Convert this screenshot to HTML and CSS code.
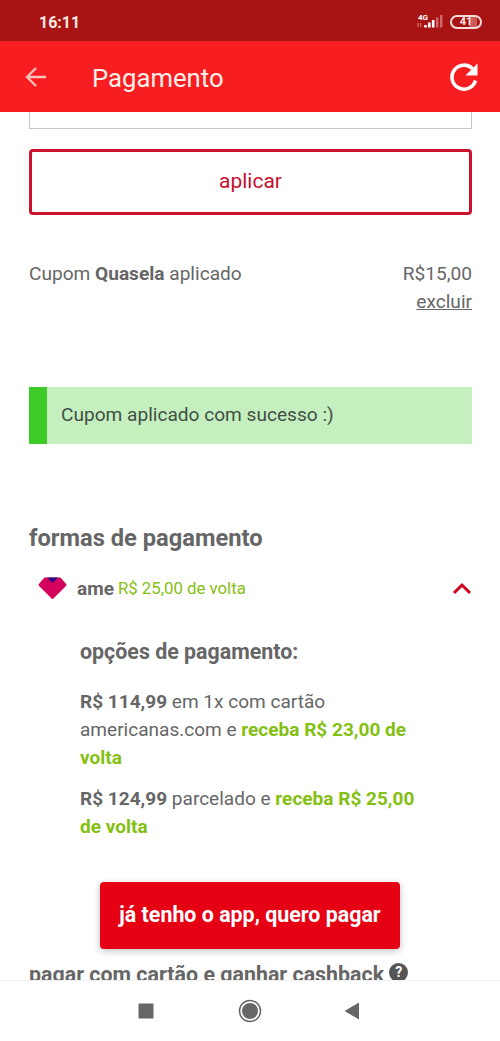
FILE: index.html
```html
<!DOCTYPE html>
<html lang="pt-BR">
<head>
<meta charset="utf-8">
<title>Pagamento</title>
<link rel="stylesheet" href="styles.css">
</head>
<body>
<div class="screen">
  <div class="status">
    <span class="clock">16:11</span>
    <div class="indicators">
      <svg class="signal" width="27" height="18" viewBox="0 0 27 18">
        <text class="net" x="1" y="6.500">4G</text>
        <path d="M1 10v4M3.700 10v4" stroke="#d97876" stroke-width="1.200"/>
        <path d="M8.500 12v2.500M12.300 9.500v5M16.200 7v7.500" stroke="#fff" stroke-width="2.600"/>
        <path d="M20.200 4.500v10M24.200 2v12.500" stroke="#d36a69" stroke-width="2.400"/>
      </svg>
      <span class="battery">41</span>
    </div>
  </div>
  <header class="appbar">
    <svg class="back" width="22" height="20" viewBox="0 0 22 20"><path d="M21 10H2M11 1L2 10l9 9" fill="none" stroke="#ffc0bc" stroke-width="2.300"/></svg>
    <h1 class="title">Pagamento</h1>
    <svg class="reload" width="28" height="28" viewBox="0 0 28 28"><path d="M22.500 5.700A12 12 0 1 0 25.500 17.500" fill="none" stroke="#fff" stroke-width="3.600"/><path d="M27.500 .5v12h-12z" fill="#fff"/></svg>
  </header>
  <main class="content">
    <div class="field"></div>
    <button class="apply">aplicar</button>
    <div class="coupon">
      <span class="coupon-name">Cupom <b>Quasela</b> aplicado</span>
      <div class="coupon-value"><span>R$15,00</span><a class="remove">excluir</a></div>
    </div>
    <div class="alert">Cupom aplicado com sucesso :)</div>
    <h2 class="heading">formas de pagamento</h2>
    <div class="method">
      <svg class="gem" width="29" height="23" viewBox="0 0 29 23"><path d="M7 1.500h15L27.500 8 14.500 21 1.500 8z" fill="#d3005d" stroke="#d3005d" stroke-width="2" stroke-linejoin="round"/><path d="M9 .5h11l-5.500 5.500z" fill="#2b0b83"/></svg>
      <b class="method-name">ame</b>
      <span class="cashback">R$ 25,00 de volta</span>
      <svg class="chevron" width="20" height="13" viewBox="0 0 20 13"><path d="M2 11l8-8 8 8" fill="none" stroke="#d0021b" stroke-width="3"/></svg>
    </div>
    <section class="options">
      <h3 class="subheading">opções de pagamento:</h3>
      <p class="option"><b>R$ 114,99</b> em 1x com cartão<br>americanas.com e <b class="green">receba R$ 23,00 de<br>volta</b></p>
      <p class="option"><b>R$ 124,99</b> parcelado e <b class="green">receba R$ 25,00<br>de volta</b></p>
    </section>
    <button class="pay">já tenho o app, quero pagar</button>
    <div class="more">
      <span class="more-label">pagar com cartão e ganhar cashback</span>
      <span class="help">?</span>
    </div>
  </main>
  <nav class="navbar">
    <svg width="16" height="16" viewBox="0 0 16 16"><path d="M.5 .5h15v15H.5z" fill="#666"/></svg>
    <svg width="24" height="24" viewBox="0 0 24 24"><circle cx="12" cy="12" r="10.500" fill="none" stroke="#666" stroke-width="1.500"/><circle cx="12" cy="12" r="8" fill="#666"/></svg>
    <svg width="16" height="18" viewBox="0 0 16 18"><path d="M15 .5v17L.5 9z" fill="#666"/></svg>
  </nav>
</div>
</body>
</html>
```
FILE: styles.css
```css
* { box-sizing: border-box; }
body { margin: 0; background: #fff; font-family: Roboto, sans-serif; color: #666; }
h1, h2, h3, p { margin: 0; }
button { font-family: inherit; padding: 0; display: block; }
b { font-weight: 700; }
.screen { width: 500px; height: 1041px; display: flex; flex-direction: column; overflow: hidden; }
.status { height: 41px; flex: none; background: #a81314; display: flex; align-items: center; justify-content: space-between; padding: 3px 18px 0 39px; color: #ffe9e4; }
.clock { font-size: 16px; font-weight: 700; }
.indicators { display: flex; align-items: center; gap: 6px; }
.signal { display: block; margin-bottom: 1px; }
.net { font: 700 8px Roboto, sans-serif; fill: #fff; }
.battery { width: 32px; height: 14px; border: 2px solid #f5dcd9; border-radius: 7px; font-size: 11px; line-height: 10.500px; font-weight: 700; text-align: center; background: linear-gradient(90deg, #a81314 62%, #ca5958 62%, #ca5958 88%, #a81314 88%); }
.appbar { height: 71px; flex: none; background: #f81d20; display: flex; align-items: center; padding: 0 22px 0 25px; }
.title { margin-left: 45px; font-size: 25.700px; line-height: 32px; font-weight: 400; color: #ffefe9; flex: 1; padding-top: 2px; }
.content { flex: 1; min-height: 0; overflow: hidden; padding: 0 28px 0 29px; }
.field { height: 17px; border: 1px solid #c6c6c6; border-top: 0; }
.apply { width: 100%; height: 66px; margin-top: 20px; padding-bottom: 2px; border: 3px solid #cb1230; border-radius: 4px; background: #fff; color: #c8102e; font-size: 21px; }
.coupon { display: flex; justify-content: space-between; margin-top: 45px; height: 57px; font-size: 19.100px; line-height: 28px; }
.coupon-value { display: flex; flex-direction: column; align-items: flex-end; }
.remove { text-decoration: underline; }
.alert { margin-top: 70px; height: 57px; border-left: 18px solid #3dcb2a; background: #c5efbf; padding-left: 14px; font-size: 19.100px; line-height: 55px; color: #3f4f44; }
.heading { margin-top: 78px; font-size: 23.700px; line-height: 32px; font-weight: 700; }
.method { display: flex; align-items: center; height: 30px; margin-top: 19px; padding: 0 0 0 9px; }
.method-name { margin-left: 10px; font-size: 19px; }
.cashback { margin-left: 4px; font-size: 16.800px; color: #84c011; flex: 1; }
.options { padding-left: 51px; font-size: 19.050px; line-height: 28.200px; }
.subheading { margin-top: 33px; font-size: 21.400px; line-height: 32px; font-weight: 700; }
.option { margin-top: 13px; white-space: nowrap; }
.subheading + .option { margin-top: 19.500px; }
.green { color: #84c011; }
.pay { width: 300px; height: 67px; margin: 40px auto 0 71px; padding-bottom: 1px; border: 0; border-radius: 4px; background: #e60014; color: #fff; font-size: 21.400px; font-weight: 700; box-shadow: 0 2px 7px rgba(0,0,0,.25); }
.more { display: flex; align-items: center; margin-top: 12px; height: 28px; white-space: nowrap; }
.more-label { font-size: 21.400px; font-weight: 700; }
.help { width: 19px; height: 19px; margin: -5px 0 0 5px; border-radius: 50%; background: #555; color: #fff; font-size: 14px; line-height: 19px; text-align: center; font-weight: 700; }
.navbar { height: 61px; flex: none; border-top: 1px solid #f1f1f1; background: #fff; display: flex; align-items: center; justify-content: space-between; padding: 0 140px 0 138px; }
.navbar svg:nth-child(2) { margin-left: 2px; }
```
